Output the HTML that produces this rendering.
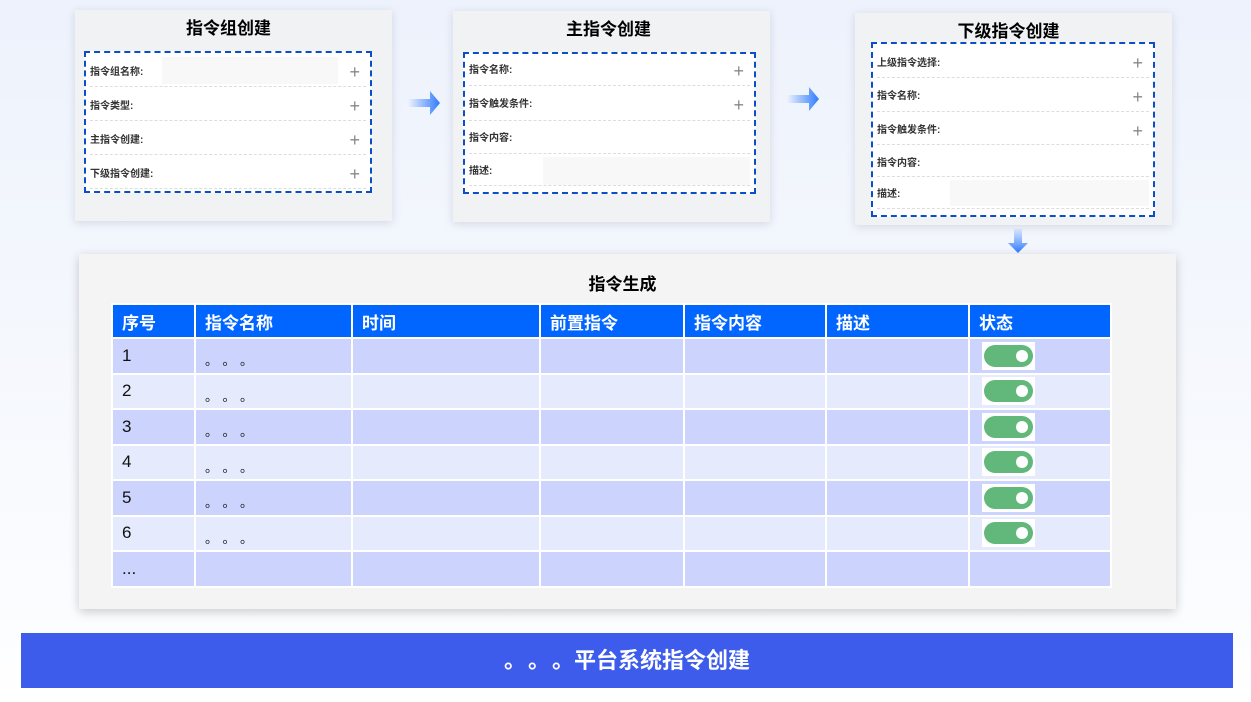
<!DOCTYPE html>
<html><head><meta charset="utf-8"><style>
*{margin:0;padding:0;box-sizing:border-box}
body{width:1251px;height:702px;overflow:hidden;position:relative;background:linear-gradient(#edf2fc 0,#f4f7fd 300px,#fbfcff 600px,#fff 702px);font-family:"Liberation Sans","Noto Sans CJK SC",sans-serif}
.card{position:absolute;background:#f1f2f4;box-shadow:0 2px 8px rgba(120,130,160,.25)}
.ct{position:absolute;left:0;right:0;text-align:center;font-weight:bold;font-size:17px;color:#000}
.dash{position:absolute;background:#fff;border:2px dashed #0a4fc5}
.r{position:absolute;left:4px;right:4px;border-bottom:1px dashed #ddd;font-size:10px;color:#333;font-weight:bold}
.r span{position:absolute;left:0}
.p{position:absolute;right:6px;font-size:18px;color:#888;font-weight:normal;line-height:1}
.in{position:absolute;background:#f8f8f8}
.arr{position:absolute}
table{position:absolute;left:111px;top:303px;border-collapse:collapse}
td{border:2px solid #fff;height:35.5px;padding:0 0 0 9px;font-size:17px;color:#111;vertical-align:middle}
tr.h td{background:#0066ff;color:#fff;font-weight:bold;height:34px}
tr.a td{background:#ccd4fd}
tr.b td{background:#e5eafd}
.dots{font-size:13px;padding-top:8px;letter-spacing:11px;padding-left:9px}
.sw{display:inline-block;width:53px;height:28px;background:#fff;position:relative;margin-left:3px;vertical-align:middle}
.sw i{position:absolute;left:2px;top:3px;width:49px;height:22px;border-radius:11px;background:#62b87b}
.sw i:after{content:"";position:absolute;right:5px;top:5px;width:12px;height:12px;border-radius:50%;background:#fff}
</style></head><body>

<div class="card" style="left:75px;top:10px;width:317px;height:211px">
 <div class="ct" style="top:4px;left:-10px">指令组创建</div>
</div>
<div class="dash" style="left:84px;top:51px;width:288px;height:142px">
 <div class="in" style="left:76px;top:4px;width:176px;height:27px"></div>
 <div class="r" style="top:0;height:34px"><span style="top:10px">指令组名称:</span><b class="p" style="top:10px">+</b></div>
 <div class="r" style="top:34px;height:34px"><span style="top:10px">指令类型:</span><b class="p" style="top:10px">+</b></div>
 <div class="r" style="top:68px;height:34px"><span style="top:10px">主指令创建:</span><b class="p" style="top:10px">+</b></div>
 <div class="r" style="top:102px;height:34px"><span style="top:10px">下级指令创建:</span><b class="p" style="top:10px">+</b></div>
</div>

<div class="card" style="left:453px;top:11px;width:317px;height:211px">
 <div class="ct" style="top:4px;left:-6px">主指令创建</div>
</div>
<div class="dash" style="left:463px;top:52px;width:293px;height:142px">
 <div class="in" style="left:78px;top:103px;width:207px;height:28px"></div>
 <div class="r" style="top:0;height:32px"><span style="top:7px">指令名称:</span><b class="p" style="top:8px">+</b></div>
 <div class="r" style="top:32px;height:35px"><span style="top:9px">指令触发条件:</span><b class="p" style="top:10px">+</b></div>
 <div class="r" style="top:67px;height:33px"><span style="top:8px">指令内容:</span></div>
 <div class="r" style="top:100px;height:32px"><span style="top:8px">描述:</span></div>
</div>

<div class="card" style="left:855px;top:13px;width:317px;height:212px">
 <div class="ct" style="top:4px;left:-10px">下级指令创建</div>
</div>
<div class="dash" style="left:871px;top:42px;width:284px;height:175px">
 <div class="in" style="left:77px;top:136px;width:199px;height:26px"></div>
 <div class="r" style="top:0;height:34px"><span style="top:10px">上级指令选择:</span><b class="p" style="top:10px">+</b></div>
 <div class="r" style="top:34px;height:34px"><span style="top:9px">指令名称:</span><b class="p" style="top:10px">+</b></div>
 <div class="r" style="top:68px;height:33px"><span style="top:9px">指令触发条件:</span><b class="p" style="top:10px">+</b></div>
 <div class="r" style="top:101px;height:32px"><span style="top:9px">指令内容:</span></div>
 <div class="r" style="top:133px;height:32px"><span style="top:8px">描述:</span></div>
</div>

<svg class="arr" style="left:408px;top:90px" width="34" height="26"><defs><linearGradient id="g1"><stop offset="0" stop-color="#2f7bff" stop-opacity="0"/><stop offset="1" stop-color="#2f7bff"/></linearGradient></defs><path d="M0 9H22V1L32 13L22 25V17H0Z" fill="url(#g1)"/></svg>
<svg class="arr" style="left:787px;top:86px" width="34" height="26"><path d="M0 9H22V1L32 13L22 25V17H0Z" fill="url(#g1)"/></svg>
<svg class="arr" style="left:1007px;top:229px" width="22" height="25"><defs><linearGradient id="g2" x2="0" y2="1"><stop offset="0" stop-color="#2f7bff" stop-opacity="0.1"/><stop offset="1" stop-color="#2f7bff"/></linearGradient></defs><path d="M7 0H15V14H21L11 24L1 14H7Z" fill="url(#g2)"/></svg>

<div class="card" style="left:79px;top:254px;width:1097px;height:355px;background:#f4f4f4;box-shadow:0 3px 10px rgba(0,0,0,.2)">
 <div class="ct" style="top:16px;left:-10px">指令生成</div>
</div>
<table>
<tr class="h"><td style="width:83px">序号</td><td style="width:157px">指令名称</td><td style="width:188px">时间</td><td style="width:144px">前置指令</td><td style="width:142px">指令内容</td><td style="width:143px">描述</td><td style="width:142px">状态</td></tr>
<tr class="a"><td>1</td><td class="dots">。。。</td><td></td><td></td><td></td><td></td><td><span class="sw"><i></i></span></td></tr>
<tr class="b"><td>2</td><td class="dots">。。。</td><td></td><td></td><td></td><td></td><td><span class="sw"><i></i></span></td></tr>
<tr class="a"><td>3</td><td class="dots">。。。</td><td></td><td></td><td></td><td></td><td><span class="sw"><i></i></span></td></tr>
<tr class="b"><td>4</td><td class="dots">。。。</td><td></td><td></td><td></td><td></td><td><span class="sw"><i></i></span></td></tr>
<tr class="a"><td>5</td><td class="dots">。。。</td><td></td><td></td><td></td><td></td><td><span class="sw"><i></i></span></td></tr>
<tr class="b"><td>6</td><td class="dots">。。。</td><td></td><td></td><td></td><td></td><td><span class="sw"><i></i></span></td></tr>
<tr class="a"><td>...</td><td></td><td></td><td></td><td></td><td></td><td></td></tr>
</table>

<div style="position:absolute;left:21px;top:633px;width:1212px;height:55px;background:#3d5ceb;color:#fff;font-weight:bold;font-size:22px;text-align:center;line-height:55px"><span style="letter-spacing:13px">。。</span><span>。</span>平台系统指令创建</div>
</body></html>
